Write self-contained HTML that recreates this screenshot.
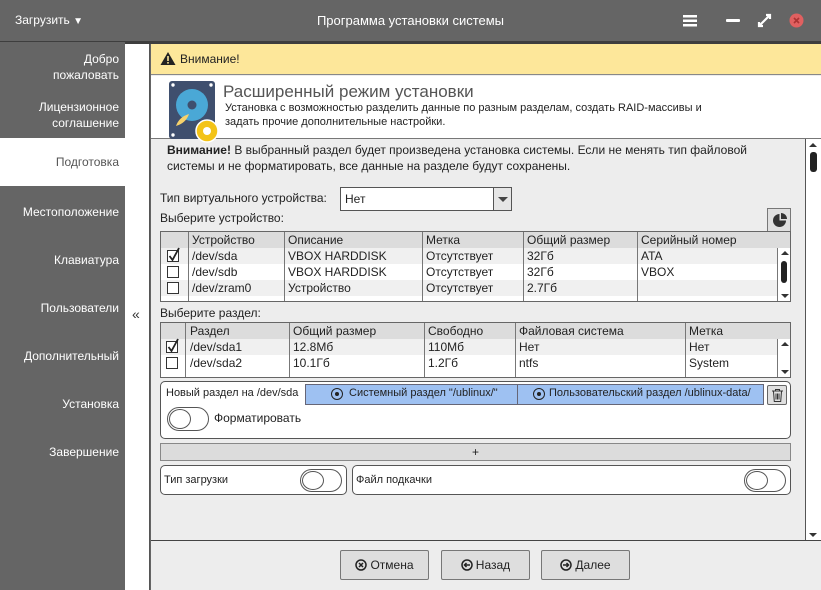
<!DOCTYPE html>
<html><head><meta charset="utf-8"><style>
*{box-sizing:border-box;margin:0;padding:0}
body{width:821px;height:590px;overflow:hidden;font-family:"Liberation Sans","DejaVu Sans",sans-serif;font-size:12px;color:#222;background:#656565;position:relative}
.a{position:absolute}
.title{left:0;top:0;width:821px;height:42px;background:#656565;color:#fff}
.side{left:0;top:42px;width:125px;height:548px;background:#656565;color:#fff;font-size:12px}
.side div{position:absolute;right:6px;text-align:right;line-height:16px}
.strip{left:125px;top:44px;width:25px;height:546px;background:#fff;border-right:1px solid #555}
.main{left:151px;top:44px;width:670px;height:546px;background:#ededed}
.tbl{border:1px solid #666;background:#fff;overflow:hidden}
.hd{background:#dcdcdc;height:16px}
.cell{position:absolute;line-height:16px;white-space:nowrap}
.vl{position:absolute;top:0;bottom:0;width:1px;background:#777}
.cb{position:absolute;width:12px;height:12px;border:1px solid #333;background:#fff}
.box{border:1px solid #555;border-radius:5px;background:#fff}
.tog{border:1.5px solid #555;border-radius:13px;background:#fff}
.tog::after{content:"";position:absolute;left:1px;top:1px;bottom:1px;width:50%;border:1.5px solid #555;border-radius:50%}
.btn{border:1px solid #777;background:#dedede;border-radius:2px;text-align:center;line-height:28px;font-size:12px}
.btn svg{vertical-align:-2px;margin-right:3px}
</style></head><body>
<div class="a title">
 <div class="a" style="left:15px;top:13px;font-size:12px">Загрузить <span style="font-size:10px">▼</span></div>
 <div class="a" style="left:0;width:821px;top:13px;text-align:center;font-size:13px">Программа установки системы</div>
 <svg class="a" style="left:683px;top:15px" width="14" height="12"><rect y="0" width="14" height="2.5" fill="#fff"/><rect y="4.5" width="14" height="2.5" fill="#fff"/><rect y="9" width="14" height="2.5" fill="#fff"/></svg>
 <div class="a" style="left:726px;top:19px;width:14px;height:3px;background:#fff;border-radius:1px"></div>
 <svg class="a" style="left:757px;top:13px" width="15" height="15"><path d="M2 13L13 2M9 2h4v4M2 9v4h4" stroke="#fff" stroke-width="2.2" fill="none"/></svg>
 <svg class="a" style="left:789px;top:13px" width="15" height="15"><circle cx="7.5" cy="7.5" r="7" fill="#e06060"/><path d="M5 5l5 5M10 5l-5 5" stroke="#a33" stroke-width="1.6"/></svg>
</div>
<div class="a" style="left:0;top:41px;width:821px;height:3px;background:#3e3e3e"></div>
<div class="a side">
 <div style="top:9px">Добро<br>пожаловать</div>
 <div style="top:57px">Лицензионное<br>соглашение</div>
 <div style="top:162px">Местоположение</div>
 <div style="top:210px">Клавиатура</div>
 <div style="top:258px">Пользователи</div>
 <div style="top:306px">Дополнительный</div>
 <div style="top:354px">Установка</div>
 <div style="top:402px">Завершение</div>
</div>
<div class="a" style="left:0;top:138px;width:125px;height:48px;background:#fff;color:#555;text-align:right;padding-right:6px;line-height:48px">Подготовка</div>
<div class="a strip"><div class="a" style="left:7px;top:262px;font-size:14px;color:#333">«</div></div>
<div class="a main">
 <div class="a" style="left:0;top:0;width:670px;height:31px;background:#fde79a;border-bottom:1px solid #888">
  <svg class="a" style="left:9px;top:7px" width="16" height="15"><path d="M8 1L15.5 14H.5z" fill="#222"/><rect x="7.2" y="5" width="1.6" height="5" fill="#fde79a"/><rect x="7.2" y="11" width="1.6" height="1.6" fill="#fde79a"/></svg>
  <div class="a" style="left:29px;top:8px">Внимание!</div>
 </div>
 <div class="a" style="left:0;top:32px;width:670px;height:63px;background:#fff;border-bottom:1px solid #777">
  <svg class="a" style="left:18px;top:5px" width="52" height="62"><rect x="0" y="0" width="46" height="58" rx="3" fill="#3f4f6e"/><circle cx="4" cy="4" r="1.7" fill="#fff"/><circle cx="42" cy="4" r="1.7" fill="#fff"/><circle cx="4" cy="54" r="1.7" fill="#fff"/><circle cx="23" cy="24" r="16" fill="#4aa8d6"/><circle cx="23" cy="24" r="4.5" fill="#3f4f6e"/><path d="M7 45q3-9 13-12q-3 9-13 12z" fill="#f6d26b"/><circle cx="38" cy="50" r="11" fill="#f3c317" stroke="#fff" stroke-width="1.5"/><circle cx="38" cy="50" r="4" fill="#fff"/></svg>
  <div class="a" style="left:72px;top:6px;font-size:17px;color:#555">Расширенный режим установки</div>
  <div class="a" style="left:74px;top:25px;font-size:11px;line-height:14px">Установка с возможностью разделить данные по разным разделам, создать RAID-массивы и<br>задать прочие дополнительные настройки.</div>
 </div>
 <div class="a" style="left:16px;top:98px;line-height:16px">
  <b>Внимание!</b> В выбранный раздел будет произведена установка системы. Если не менять тип файловой<br>системы и не форматировать, все данные на разделе будут сохранены.</div>
 <div class="a" style="left:9px;top:147px">Тип виртуального устройства:</div>
 <div class="a" style="left:189px;top:143px;width:172px;height:24px;background:#fff;border:1px solid #555">
  <div class="a" style="left:4px;top:4px">Нет</div>
  <div class="a" style="left:152px;top:0;width:18px;height:22px;background:#e6e6e6;border-left:1px solid #555"><div class="a" style="left:4px;top:9px;border:5px solid transparent;border-top-color:#444;border-bottom:0"></div></div>
 </div>
 <div class="a" style="left:9px;top:167px">Выберите устройство:</div>
 <div class="a" style="left:616px;top:164px;width:24px;height:24px;background:#e0e0e0;border:1px solid #777"><svg class="a" style="left:4px;top:4px" width="15" height="15"><path d="M7.5 1a6.5 6.5 0 1 0 6.5 6.5H7.5z" fill="#333"/><path d="M9 0v6h6A6 6 0 0 0 9 0z" fill="#333"/></svg></div>
</div>
<!-- device table -->
<div class="a tbl" style="left:160px;top:231px;width:631px;height:71px">
 <div class="hd"></div>
 <div class="a" style="left:0;top:16px;width:616px;height:16px;background:#f0f0f0"></div>
 <div class="a" style="left:0;top:48px;width:616px;height:16px;background:#f0f0f0"></div>
 <div class="vl" style="left:27px"></div><div class="vl" style="left:123px"></div><div class="vl" style="left:261px"></div><div class="vl" style="left:362px"></div><div class="vl" style="left:476px"></div>
 <div class="cell" style="left:31px;top:0">Устройство</div><div class="cell" style="left:127px;top:0">Описание</div><div class="cell" style="left:265px;top:0">Метка</div><div class="cell" style="left:366px;top:0">Общий размер</div><div class="cell" style="left:480px;top:0">Серийный номер</div>
 <div class="cb" style="left:6px;top:18px"></div><svg class="a" style="left:6px;top:14px" width="14" height="16"><path d="M2.5 10l3 4L12 2" stroke="#222" stroke-width="1.8" fill="none"/></svg>
 <div class="cb" style="left:6px;top:34px"></div><div class="cb" style="left:6px;top:50px"></div>
 <div class="cell" style="left:31px;top:16px">/dev/sda</div><div class="cell" style="left:127px;top:16px">VBOX HARDDISK</div><div class="cell" style="left:265px;top:16px">Отсутствует</div><div class="cell" style="left:366px;top:16px">32Гб</div><div class="cell" style="left:480px;top:16px">ATA</div>
 <div class="cell" style="left:31px;top:32px">/dev/sdb</div><div class="cell" style="left:127px;top:32px">VBOX HARDDISK</div><div class="cell" style="left:265px;top:32px">Отсутствует</div><div class="cell" style="left:366px;top:32px">32Гб</div><div class="cell" style="left:480px;top:32px">VBOX</div>
 <div class="cell" style="left:31px;top:48px">/dev/zram0</div><div class="cell" style="left:127px;top:48px">Устройство</div><div class="cell" style="left:265px;top:48px">Отсутствует</div><div class="cell" style="left:366px;top:48px">2.7Гб</div>
 <div class="a" style="left:616px;top:16px;width:14px;height:53px;background:#fff;border-left:1px solid #777"><div class="a" style="left:3px;top:3px;border:4px solid transparent;border-bottom-color:#333;border-top:0"></div><div class="a" style="left:3px;top:13px;width:6px;height:22px;background:#222;border-radius:3px"></div><div class="a" style="left:3px;bottom:3px;border:4px solid transparent;border-top-color:#333;border-bottom:0"></div></div>
</div>
<div class="a" style="left:160px;top:306px">Выберите раздел:</div>
<div class="a tbl" style="left:160px;top:322px;width:631px;height:56px">
 <div class="hd"></div>
 <div class="a" style="left:0;top:16px;width:616px;height:16px;background:#f0f0f0"></div>
 <div class="vl" style="left:24px"></div><div class="vl" style="left:128px"></div><div class="vl" style="left:263px"></div><div class="vl" style="left:354px"></div><div class="vl" style="left:524px"></div>
 <div class="cell" style="left:29px;top:0">Раздел</div><div class="cell" style="left:132px;top:0">Общий размер</div><div class="cell" style="left:267px;top:0">Свободно</div><div class="cell" style="left:358px;top:0">Файловая система</div><div class="cell" style="left:528px;top:0">Метка</div>
 <div class="cb" style="left:5px;top:18px"></div><svg class="a" style="left:5px;top:14px" width="14" height="16"><path d="M2.5 10l3 4L12 2" stroke="#222" stroke-width="1.8" fill="none"/></svg><div class="cb" style="left:5px;top:34px"></div>
 <div class="cell" style="left:29px;top:16px">/dev/sda1</div><div class="cell" style="left:132px;top:16px">12.8Мб</div><div class="cell" style="left:267px;top:16px">110Мб</div><div class="cell" style="left:358px;top:16px">Нет</div><div class="cell" style="left:528px;top:16px">Нет</div>
 <div class="cell" style="left:29px;top:32px">/dev/sda2</div><div class="cell" style="left:132px;top:32px">10.1Гб</div><div class="cell" style="left:267px;top:32px">1.2Гб</div><div class="cell" style="left:358px;top:32px">ntfs</div><div class="cell" style="left:528px;top:32px">System</div>
 <div class="a" style="left:616px;top:16px;width:14px;height:38px;background:#fff;border-left:1px solid #777"><div class="a" style="left:3px;top:3px;border:4px solid transparent;border-bottom-color:#333;border-top:0"></div><div class="a" style="left:3px;bottom:3px;border:4px solid transparent;border-top-color:#333;border-bottom:0"></div></div>
</div>
<div class="a box" style="left:160px;top:381px;width:631px;height:58px">
 <div class="a" style="left:5px;top:5px;font-size:11px">Новый раздел на /dev/sda</div>
 <div class="a" style="left:144px;top:2px;width:459px;height:21px;background:#9ec1f2;border:1px solid #667"></div>
 <div class="a" style="left:356px;top:2px;width:1px;height:21px;background:#667"></div>
 <div class="a" style="left:170px;top:6px;width:12px;height:12px;border:1.5px solid #222;border-radius:50%"><div class="a" style="left:2.5px;top:2.5px;width:4px;height:4px;background:#222;border-radius:50%"></div></div>
 <div class="a" style="left:188px;top:5px;font-size:11px">Системный раздел "/ublinux/"</div>
 <div class="a" style="left:372px;top:6px;width:12px;height:12px;border:1.5px solid #222;border-radius:50%"><div class="a" style="left:2.5px;top:2.5px;width:4px;height:4px;background:#222;border-radius:50%"></div></div>
 <div class="a" style="left:388px;top:5px;font-size:11px">Пользовательский раздел /ublinux-data/</div>
 <div class="a" style="left:606px;top:3px;width:20px;height:20px;background:#e0e0e0;border:1px solid #666;border-radius:2px"><svg class="a" style="left:3px;top:2px" width="13" height="15"><path d="M1 3h11M4.5 3V1.5h4V3M2.5 3.5l.8 10h6.4l.8-10M5 5.5v6M6.5 5.5v6M8 5.5v6" stroke="#333" fill="none" stroke-width="1"/></svg></div>
 <div class="a tog" style="left:6px;top:25px;width:42px;height:24px"></div>
 <div class="a" style="left:53px;top:29px;font-size:12px">Форматировать</div>
</div>
<div class="a" style="left:160px;top:443px;width:631px;height:18px;background:#dcdcdc;border:1px solid #888;text-align:center;line-height:16px">+</div>
<div class="a box" style="left:160px;top:465px;width:187px;height:30px"><div class="a" style="left:3px;top:8px;font-size:11px">Тип загрузки</div><div class="a tog" style="left:139px;top:3px;width:42px;height:23px"></div></div>
<div class="a box" style="left:352px;top:465px;width:439px;height:30px"><div class="a" style="left:3px;top:8px;font-size:11px">Файл подкачки</div><div class="a tog" style="left:391px;top:3px;width:42px;height:23px"></div></div>
<div class="a" style="left:805px;top:139px;width:16px;height:402px;background:#fff;border-left:1px solid #555">
 <div class="a" style="left:3px;top:4px;border:4px solid transparent;border-bottom-color:#333;border-top:0"></div>
 <div class="a" style="left:4px;top:13px;width:7px;height:20px;background:#222;border-radius:3px"></div>
 <div class="a" style="left:3px;bottom:4px;border:4px solid transparent;border-top-color:#333;border-bottom:0"></div>
</div>
<div class="a" style="left:151px;top:540px;width:670px;height:1px;background:#444"></div>
<div class="a btn" style="left:340px;top:550px;width:89px;height:30px"><svg width="12" height="12"><circle cx="6" cy="6" r="5" fill="none" stroke="#222" stroke-width="1.5"/><path d="M4 4l4 4M8 4l-4 4" stroke="#222" stroke-width="1.5"/></svg>Отмена</div>
<div class="a btn" style="left:441px;top:550px;width:89px;height:30px"><svg width="12" height="12"><circle cx="6" cy="6" r="5" fill="none" stroke="#222" stroke-width="1.5"/><path d="M9 6H3.5M5.5 4L3.5 6l2 2" stroke="#222" stroke-width="1.5" fill="none"/></svg>Назад</div>
<div class="a btn" style="left:541px;top:550px;width:89px;height:30px"><svg width="12" height="12"><circle cx="6" cy="6" r="5" fill="none" stroke="#222" stroke-width="1.5"/><path d="M3 6h5.5M6.5 4l2 2-2 2" stroke="#222" stroke-width="1.5" fill="none"/></svg>Далее</div>
</body></html>
